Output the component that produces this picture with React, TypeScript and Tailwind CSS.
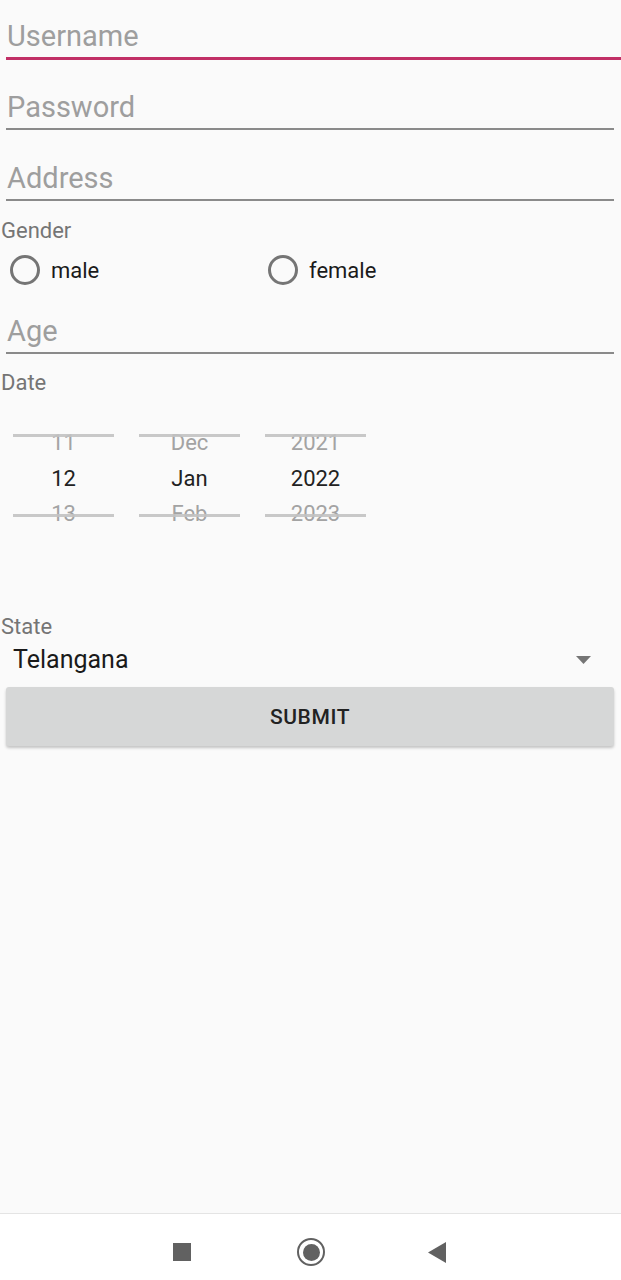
import React from "react";

const font = { fontFamily: "Roboto, 'Noto Sans', sans-serif" };

function PickerColumn({ items }: { items: string[] }) {
  return (
    <div className="relative w-[101px]">
      {items.map((it, i) => (
        <div
          key={it}
          className={
            "h-[35.5px] leading-[35px] text-center text-[22px] " +
            (i === 1 ? "text-[#222222]" : "text-[#a3a3a3]")
          }
        >
          {it}
        </div>
      ))}
      {/* selection dividers */}
      <div className="absolute left-0 right-0 top-[9px] h-[3px] bg-[#c2c2c2]/90" />
      <div className="absolute left-0 right-0 top-[89px] h-[3px] bg-[#c2c2c2]/90" />
    </div>
  );
}

function Radio({ label }: { label: string }) {
  return (
    <div className="flex items-center h-[30px]">
      <div className="w-[30px] h-[30px] rounded-full border-[3px] border-[#757575] ml-[10px]" />
      <span className="ml-[11px] text-[22px] text-[#1a1a1a]">{label}</span>
    </div>
  );
}

export default function App() {
  return (
    <main className="h-screen bg-[#fafafa] flex flex-col" style={font}>
      <div className="flex-1">
        {/* Username (focused) */}
        <div className="ml-[6px] h-[60px] pt-[19px] pl-[1px] border-b-[3px] border-[#c12f66] text-[29px] leading-[34px] text-[#9e9e9e]">
          Username
        </div>

        {/* Password */}
        <div className="ml-[6px] mr-[7px] pt-[30px] pb-[4px] pl-[1px] border-b-2 border-[#8a8a8a] text-[29px] leading-[34px] text-[#9e9e9e]">
          Password
        </div>

        {/* Address */}
        <div className="ml-[6px] mr-[7px] pt-[31px] pb-[4px] pl-[1px] border-b-2 border-[#8a8a8a] text-[29px] leading-[34px] text-[#9e9e9e]">
          Address
        </div>

        {/* Gender */}
        <div className="mt-[17px] pl-[1px] text-[22px] leading-[26px] text-[#757575]">Gender</div>
        <div className="mt-[11px] flex">
          <div className="w-[258px]">
            <Radio label="male" />
          </div>
          <Radio label="female" />
        </div>

        {/* Age */}
        <div className="mt-[29px] ml-[6px] mr-[7px] pb-[4px] pl-[1px] border-b-2 border-[#8a8a8a] text-[29px] leading-[34px] text-[#9e9e9e]">
          Age
        </div>

        {/* Date */}
        <div className="mt-[16px] pl-[1px] text-[22px] leading-[26px] text-[#757575]">Date</div>
        <div className="mt-[29px] ml-[13px] flex gap-[25px]">
          <PickerColumn items={["11", "12", "13"]} />
          <PickerColumn items={["Dec", "Jan", "Feb"]} />
          <PickerColumn items={["2021", "2022", "2023"]} />
        </div>

        {/* State */}
        <div className="mt-[82px] pl-[1px] text-[22px] leading-[26px] text-[#757575]">State</div>
        <div className="mt-[5px] flex items-center justify-between pl-[13px] pr-[30px] h-[30px]">
          <span className="text-[25px] leading-[30px] text-[#1a1a1a]">Telangana</span>
          <svg width="15" height="8" viewBox="0 0 15 8">
            <path d="M0 0 L15 0 L7.5 8 Z" fill="#757575" />
          </svg>
        </div>

        <button className="mt-[12px] ml-[6px] w-[608px] h-[59px] pt-[4px] rounded-[3px] bg-[#d6d7d7] shadow-[0_2px_3px_rgba(0,0,0,0.22)] text-[21px] font-medium tracking-[0.6px] text-[#222222]">
          SUBMIT
        </button>
      </div>

      {/* Android navigation bar */}
      <nav className="h-[67px] bg-white border-t border-[#e4e4e4] pt-[24px]">
        <div className="h-[28px] flex items-center">
          <div className="ml-[173px] w-[18px] h-[18px] bg-[#616161]" />
          <div className="ml-[106px] w-[28px] h-[28px] rounded-full border-2 border-[#616161] flex items-center justify-center">
            <div className="w-[17px] h-[17px] rounded-full bg-[#616161]" />
          </div>
          <svg width="18" height="21" viewBox="0 0 18 21" className="ml-[103px]">
            <path d="M18 0 L18 21 L0 10.5 Z" fill="#616161" />
          </svg>
        </div>
      </nav>
    </main>
  );
}
